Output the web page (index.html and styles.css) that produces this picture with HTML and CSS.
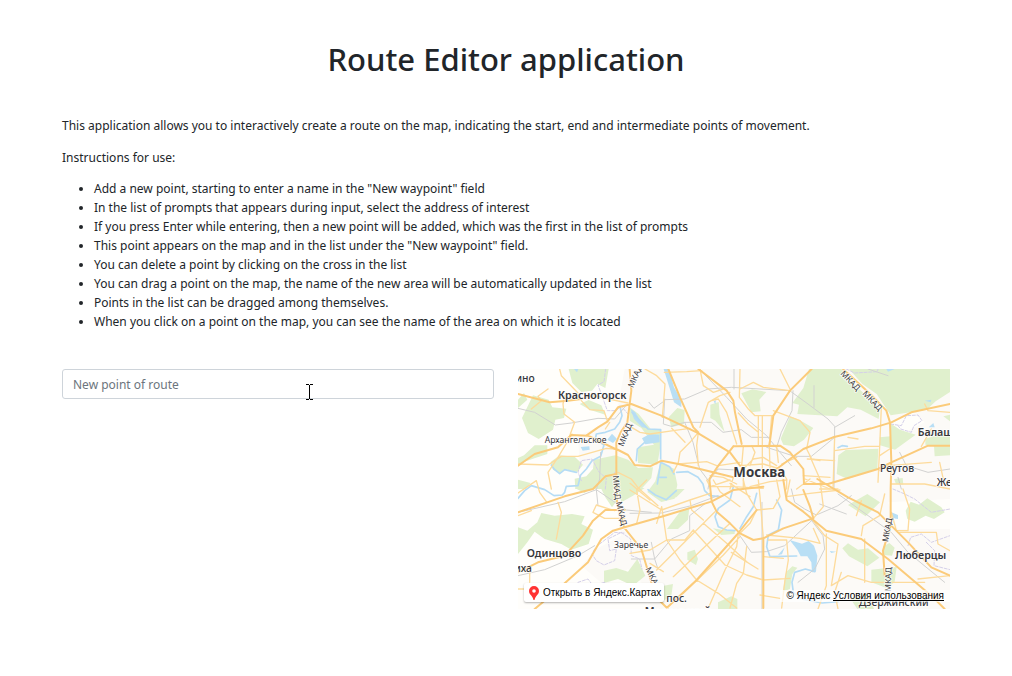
FILE: index.html
```html
<!DOCTYPE html>
<html lang="en">
<head>
<meta charset="utf-8">
<meta name="viewport" content="width=device-width, initial-scale=1">
<title>Route Editor application</title>
<link rel="stylesheet" href="styles.css">
</head>
<body>
<main class="page">
  <h1 class="title">Route Editor application</h1>
  <section class="intro">
    <p>This application allows you to interactively create a route on the map, indicating the start, end and intermediate points of movement.</p>
    <p>Instructions for use:</p>
    <ul class="steps">
      <li>Add a new point, starting to enter a name in the "New waypoint" field</li>
      <li>In the list of prompts that appears during input, select the address of interest</li>
      <li>If you press Enter while entering, then a new point will be added, which was the first in the list of prompts</li>
      <li>This point appears on the map and in the list under the "New waypoint" field.</li>
      <li>You can delete a point by clicking on the cross in the list</li>
      <li>You can drag a point on the map, the name of the new area will be automatically updated in the list</li>
      <li>Points in the list can be dragged among themselves.</li>
      <li>When you click on a point on the map, you can see the name of the area on which it is located</li>
    </ul>
  </section>
  <section class="editor">
    <form class="route-form">
      <input class="point-input" type="text" placeholder="New point of route" aria-label="New point of route">
      <svg class="cursor" viewBox="0 0 7 16" aria-hidden="true"><path d="M0 .5h3M4 .5h3M3.5 1v14M0 15.5h3M4 15.5h3"/></svg>
    </form>
    <div class="map">
      <svg class="map-canvas" viewBox="0 0 1296 720" preserveAspectRatio="xMidYMid slice" role="img" aria-label="Москва">
        <rect class="land" width="1296" height="720"/>
        <path class="field" d="M0 0H320L300 110 250 170 180 200 185 290 290 310 300 450 310 500 235 540 190 590 260 650 330 600 380 650 400 720H0ZM1110 160 1190 130 1220 160 1160 190ZM1110 400 1296 390V480H1140Z"/>
        <g class="park">
          <g transform="translate(0 -3)">
            <path d="M152 3H272L262 60 238 48 222 68 190 72 163 45ZM0 95 18 75 28 95 0 120ZM12 150 45 82 92 95 103 118 145 122 138 150 112 155 105 185 62 213 30 195ZM185 108 212 96 250 112 262 140 215 125ZM98 282 125 262 170 266 195 290 178 312 140 303 125 316 105 305ZM18 262 50 232 88 232 88 258 45 272 0 288V270ZM0 335 38 345 22 363H0ZM170 332 205 325 225 302 228 275 292 262 330 275 360 300 405 298 400 330 370 363H172ZM335 118 362 138 400 185 427 185 428 230 418 290 360 285 360 238 408 230 370 180 335 158ZM428 283 468 302 478 350 470 392 430 402 388 372 412 340ZM452 148 478 120 500 126 498 168 460 178ZM577 110 602 102 605 140 620 192 592 158 577 150Z"/>
          </g>
          <g transform="translate(648 -3)">
            <path d="M175 105 208 60 225 3H322L360 48 438 122 434 153 380 125 340 118 310 145 190 138 195 110ZM345 3H648V72L605 100 578 125 470 142 428 78 385 48ZM22 76 55 64 97 72 76 95 80 130 52 133ZM140 212 168 145 195 155 238 180 210 215 180 235 148 230ZM313 262 335 246 433 242 430 302 340 333 308 318ZM437 208 470 205 468 165 498 185 545 200 483 245 438 232ZM574 212 648 190V262L602 265 600 235 574 230ZM480 333 506 330 508 350 486 348ZM628 145 648 140V160Z"/>
          </g>
          <g transform="translate(0 360)">
            <path d="M0 115 28 125 58 100 70 72 110 80 162 75 200 82 190 105 225 122 212 165 160 182 130 165 80 150 50 128 28 160 0 195ZM170 -3H380L345 20 310 40 300 0H215L200 12ZM250 0H285L300 30 282 55 262 25ZM405 0H500L475 25 440 35ZM447 120 488 65 514 55 510 92 480 120ZM258 245 295 237 330 248 358 210 382 260 345 290 300 270 258 282ZM508 190 530 182 540 210 534 228 508 212ZM438 290 465 285 460 320 432 338ZM585 118 610 122 650 125V135L610 138ZM600 340 640 322 658 330V360H600Z"/>
          </g>
          <g transform="translate(648 360)">
            <path d="M342 48 400 15 438 40 395 82ZM515 65 530 38 555 47 580 28 622 55 632 70 600 90 575 80 542 98 520 90ZM325 178 342 163 372 182 402 178 436 206 400 232 345 202ZM448 172 466 162 482 176 474 200 450 198ZM412 242 488 234 482 278 460 298 412 280ZM146 308 156 250 175 232 190 236 175 255 168 300ZM350 330 400 310 420 360H370Z"/>
          </g>
        </g>
        <g class="water">
          <path d="M437 0 453 0 468 55 490 92 490 115 468 100ZM372 208 395 195 424 197 425 220 382 226ZM268 212 282 194 297 210 285 222ZM188 234 214 232 215 242 194 245ZM338 120 352 130 365 152 388 178 372 175 348 150ZM168 0 181 0 177 10ZM587 97 594 94 592 106Z"/>
          <path d="M815 513 852 524 872 516 888 530 898 560 894 608 882 610 880 580 868 562 848 562 838 542ZM792 556 800 535 780 558ZM1120 430 1140 438 1140 450 1122 448ZM935 546 955 548 940 552ZM1220 95 1240 92 1238 100ZM1232 175 1246 162 1250 175ZM1105 0H1130L1110 8Z"/>
        </g>
        <g class="river">
          <path d="M306 112 312 140 305 160 290 180 262 190 235 195 232 210 258 228 248 262 222 275 205 300 188 318 180 350 145 352 140 370 133 378 108 380 80 362 40 350 20 365 0 388M100 288 108 300 125 314 140 302 175 310"/>
          <path d="M342 130 390 180 428 182 428 270M355 275 358 240 380 220M418 345 428 280 455 293 468 315M420 325 445 325M390 362 412 378 445 392 475 365"/>
          <path d="M476 310 510 308 540 325 555 345 560 365 575 380 605 383M646 353 636 393 601 418 591 443 601 473 626 483 651 485M716 373 706 413 686 443 666 478M776 393 791 423 781 483 751 498 746 533 756 563 836 561M890 608 862 600 830 610 822 640 826 670 850 690 912 702 960 698M960 236 972 230 988 232"/>
        </g>
        <g class="border">
          <path d="M263 0 258 38 240 48 250 75 268 125 292 125 310 112 330 135M262 360 265 328 242 308 222 270 190 275 180 310 190 335M290 310 300 358M230 540 222 555 235 575 258 588 290 575 295 540 275 545 270 510 310 490 338 510 340 560 365 570 372 600M245 525 290 490 318 492M180 640 210 630 225 650 260 640M1118 165 1150 170 1165 140 1200 138 1212 155 1188 170 1180 190 1148 180 1140 170M1125 360 1160 375 1190 390 1240 430 1296 420M1170 530 1178 505 1210 495 1240 520 1296 500M1225 520 1250 545 1248 590 1296 602M985 0 1010 12 1078 8 1080 0"/>
        </g>
        <g class="rail">
          <path d="M0 118 50 130 112 168 160 162 240 148 290 150 322 112M0 430 140 398 235 362 325 423 400 430M0 620 80 602 180 560 230 530M393 100 408 118 440 95M248 250 245 330 235 362 240 410"/>
          <path d="M648 0V60M440 90 436 165 460 172 500 160 580 160 615 190 670 182 700 205 755 205M500 160 525 220 545 300 575 340M440 92 500 90 570 60 640 55 815 65 870 105 930 150 950 172 948 360M544 0 626 85 686 150 746 200 786 250 820 290M888 50 888 115M950 175 1010 140M746 235 830 262 880 262 950 205M825 65 822 125 790 190 776 235M655 303 600 300 575 333 570 360"/>
          <path d="M905 405 985 435M960 375 1120 490 1170 550 1280 640M820 360 830 400 860 420 895 438 960 410 1000 380M870 440 915 500 920 540 890 600 840 640M732 400V720M661 493 700 550 745 548 800 530 886 450M1145 250 1165 290 1230 310 1296 300M1140 325 1150 360M1050 0 1110 20"/>
          <path d="M336 433 430 432 520 410 600 380M340 570 410 570 460 510 515 485 515 440 560 405M400 520 410 570 420 600"/>
        </g>
        <g class="street">
          <path d="M0 285 90 288 130 262 180 262 265 238 290 240M100 360 90 310 120 265 162 195M155 200 170 160 138 135 135 105 140 80M187 90 230 80 262 88 330 102M190 95 215 122 258 125 268 155M275 160 262 180M40 120 70 95 60 82 90 60M125 0 130 20 180 72M300 310 340 330 362 358 420 410M0 372 55 335 65 370 85 398M120 400 130 430 115 510M225 430 235 408 290 425M225 430 260 448 320 448"/>
          <g transform="translate(336 0)">
            <path d="M0 172 30 190 60 195 130 185 180 178M45 0 80 20 105 45 100 110 97 145M103 10 170 8 215 5M205 190 200 230 205 290M210 175 235 100 270 80 300 70M245 95 265 90 290 130 320 225M125 178 165 220M205 190 180 220 150 250 145 280 130 310M210 0 220 50 250 70 280 60M330 60 370 40 400 55 480 65M330 0 328 85 355 120 375 140 430 140M385 140V230M397 140V300M425 140 418 230 420 300M450 0 480 60M325 132 355 165 385 190M430 125 510 155 540 190 530 240 545 270 570 275M340 360 340 300 370 270 400 265 440 290M330 290 400 285 450 300 470 330 470 360M365 230 375 250 360 290M340 232 335 290M440 235 445 280M455 285 500 265M310 325 300 360M525 330 600 360M520 320 600 325M500 360 540 330M145 285 230 278 260 290M240 320 280 325 320 345M265 290 330 280"/>
          </g>
          <g transform="translate(336 333)">
            <path d="M285 255 350 285 400 300 480 295M325 160 320 200 285 270 235 384M95 80 110 180 150 240 200 300 265 340 320 384M80 270 200 150 255 95M130 290 230 195 300 130M160 340 280 225 330 170M220 130 290 190 350 245M190 150 285 255M110 180 165 180 190 150M0 30 95 90 180 60 240 40M180 60 185 90 220 120M250 0 270 35 330 80M240 20 310 20 400 25M340 0 350 40 380 90 430 85 450 50 440 0M380 90 360 130 330 160M385 0 390 50 400 175M415 180 470 180 475 240 465 300 455 384M300 10 360 50M410 165 510 175 570 190 550 145M480 0 470 50 540 40 630 30M550 115 580 80 570 0M0 220 60 210 110 180M60 250 100 275M400 230 460 235M390 345 450 355M20 130 30 90 20 30 50 0M0 10 60 60M350 200 340 280 320 310 300 384M230 0 240 20 300 0M360 20 420 5 470 0M95 80 80 130"/>
          </g>
          <path d="M950 202 945 360M950 245 1040 232 1085 232M1090 115 1085 235 1080 340M1085 305 1110 290 1240 280M1210 232 1240 180M990 205 1020 210M1120 345 1220 345 1296 360M1265 280 1280 350M875 260 910 340M1115 240 1085 260M868 270 950 275M1220 105 1230 125 1296 130"/>
          <path d="M0 440 40 425M0 660H30M35 640V590M640 550 720 600"/>
          <path d="M925 495 925 650 900 720M885 455 920 500 960 525 945 620 940 650 990 620 1060 640 1220 640M1030 500 1035 470 1085 440 1100 375M1120 430 1135 485 1170 485 1175 420 1155 360M1145 490H1255L1260 525 1296 545M1030 395 1015 440M970 610 950 670 960 720M1040 510 1040 640M1296 620 1200 630M960 360 905 360"/>
        </g>
        <g class="road">
          <path d="M335 0 340 65 335 105 328 160 308 190 295 220V300L297 400 318 475 370 540 400 640 420 690 450 720M0 290 50 255 120 235 160 198 210 200 292 240M205 200 240 175 268 158 300 115 340 105 430 140 536 190 636 250 666 290M295 240 330 258 350 288 396 292 431 275 481 285 546 300 646 325M295 315 262 322 225 360 140 382 0 430M0 610 60 580 140 560 195 500 225 455 262 423 320 423M50 720 110 670 210 580 250 510 285 485 330 472 430 443 580 398 646 363 736 353M0 75 95 100 150 95 190 90M451 0 486 85 526 175 541 190M446 717 536 633 656 498 716 423"/>
          <path d="M541 0 626 65 646 95 651 130 671 225M646 232 786 230 816 250 856 300 858 345M881 0 816 65 766 140 754 230M646 232 601 290 574 330 581 398 596 428 636 463 666 493 706 513 736 508 796 478 886 448 876 413 856 363M736 508V717"/>
          <path d="M776 300 816 270 856 240 945 205 1060 178 1120 160 1180 130 1296 105M975 0 1060 78 1105 125 1116 160 1120 280 1118 360V470L1095 545 1100 620M858 345 930 345 1080 300 1120 280 1230 230 1296 230"/>
          <path d="M796 333 806 393 856 428 925 485 1030 510 1110 570 1240 680 1280 720M898 330 990 385 1080 430 1170 520 1240 595 1296 620"/>
        </g>
        <g class="label small">
          <text x="288" y="536">Заречье</text>
          <text x="80" y="222">Архангельское</text>
        </g>
        <g class="label town">
          <text class="at-end" x="50" y="40">Пушкино</text>
          <text x="1086" y="308">Реутов</text>
          <text x="1256" y="352">Железнодорожный</text>
          <text class="at-end" x="42" y="610">Лиха</text>
          <text x="445" y="700">пос.</text>
          <text x="1022" y="710">Дзержинский</text>
        </g>
        <g class="label city">
          <text x="120" y="91">Красногорск</text>
          <text x="26" y="563">Одинцово</text>
          <text x="1199" y="200">Балашиха</text>
          <text x="1131" y="569">Люберцы</text>
          <text x="380" y="738">Московский</text>
        </g>
        <text class="label capital" x="646" y="323">Москва</text>
        <g class="label ring">
          <text transform="translate(345 58) rotate(-66)">МКАД</text>
          <text transform="translate(316 234) rotate(-68)">МКАД</text>
          <text transform="translate(284 320) rotate(84)">МКАД</text>
          <text transform="translate(294 400) rotate(77)">МКАД</text>
          <text transform="translate(382 599) rotate(64)">МКАД</text>
          <text transform="translate(966 15) rotate(46)">МКАД</text>
          <text transform="translate(1032 75) rotate(46)">МКАД</text>
          <text transform="translate(1110 520) rotate(-80)">МКАД</text>
          <text transform="translate(1118 668) rotate(-88)">МКАД</text>
        </g>
      </svg>
      <a class="open-link" href="#open">
        <svg class="pin" viewBox="0 0 10 14" aria-hidden="true"><path fill="#f33" d="M5 0a5 5 0 0 0-5 5c0 2.500 1.500 3.500 2.800 5.200C3.700 11.400 4.200 12.500 4.500 14h1c.3-1.500.8-2.600 1.700-3.800C8.500 8.500 10 7.500 10 5a5 5 0 0 0-5-5z"/><circle cx="5" cy="5" r="1.800" fill="#fff"/></svg>
        Открыть в Яндекс.Картах
      </a>
      <div class="copyright">© Яндекс <a href="#terms">Условия использования</a></div>
    </div>
  </section>
</main>
</body>
</html>
```
FILE: styles.css
```css
* {
  box-sizing: border-box;
}

body {
  margin: 0;
  background: #fff;
  color: #212529;
  font: 12px/19px "Noto Sans", "Open Sans", sans-serif;
}

.page {
  max-width: 936px;
  margin: 0 auto;
  padding: 40px 24px;
}

.title {
  margin: 0 0 38px;
  font-size: 31px;
  font-weight: 500;
  line-height: 38px;
  text-align: center;
}

.intro p {
  margin: 0 0 13px;
}

.intro p:last-of-type {
  margin-bottom: 12px;
}

.steps {
  margin: 0 0 38px;
  padding-left: 32px;
}

.editor {
  display: grid;
  grid-template-columns: 1fr 1fr;
  gap: 24px;
}

.route-form {
  position: relative;
}

.point-input {
  display: block;
  width: 100%;
  height: 30px;
  padding: 0 10px;
  border: 1px solid #ced4da;
  border-radius: 3px;
  background: #fff;
  color: #495057;
  font: inherit;
}

.point-input::placeholder {
  color: #6c757d;
  opacity: 1;
}

.cursor {
  position: absolute;
  top: 15px;
  left: 244px;
  width: 7px;
  height: 16px;
  fill: none;
  stroke: #000;
  pointer-events: none;
}

.map {
  position: relative;
  height: 240px;
  overflow: hidden;
}

.map-canvas {
  display: block;
  width: 100%;
  height: 100%;
}

.land { fill: #fcfaf7; }
.field { fill: #fffefb; }
.park { fill: #e0f0cd; }
.water { fill: #b9dff5; }

.river,
.border,
.rail,
.street,
.road {
  fill: none;
  stroke-linejoin: round;
  stroke-linecap: round;
}

.river { stroke: #b5dcf5; stroke-width: 5px; }
.border { stroke: #d5d0e9; stroke-width: 3px; stroke-dasharray: 9 5; }
.rail { stroke: #d2d2d1; stroke-width: 3px; }
.street { stroke: #fddb9c; stroke-width: 4px; }
.road { stroke: #fbcb7a; stroke-width: 6px; }

.label {
  fill: #38383c;
  stroke: #fff;
  stroke-width: 5px;
  stroke-opacity: 0.8;
  stroke-linejoin: round;
  paint-order: stroke;
  font-family: "Noto Sans", "Open Sans", sans-serif;
}

.small { font-size: 26px; }
.town { font-size: 31px; font-weight: 500; }
.city { font-size: 32px; font-weight: 600; }
.capital { font-size: 40px; font-weight: 700; }
.ring { font-size: 25px; }
.at-end { text-anchor: end; }

.open-link {
  position: absolute;
  bottom: 7px;
  left: 6px;
  display: flex;
  align-items: center;
  gap: 4px;
  height: 19px;
  padding: 0 3px 0 5px;
  border-radius: 2px;
  background: #fff;
  box-shadow: 0 1px 2px rgba(0, 0, 0, 0.3);
  color: #000;
  font: 10px/19px "Liberation Sans", Arial, sans-serif;
  text-decoration: none;
  white-space: nowrap;
}

.pin {
  width: 10px;
  height: 14px;
}

.copyright {
  position: absolute;
  right: 0;
  bottom: 7px;
  padding: 0 6px;
  background: rgba(255, 255, 255, 0.7);
  color: #000;
  font: 10px/12px "Liberation Sans", Arial, sans-serif;
  white-space: nowrap;
}

.copyright a {
  color: inherit;
}
```
